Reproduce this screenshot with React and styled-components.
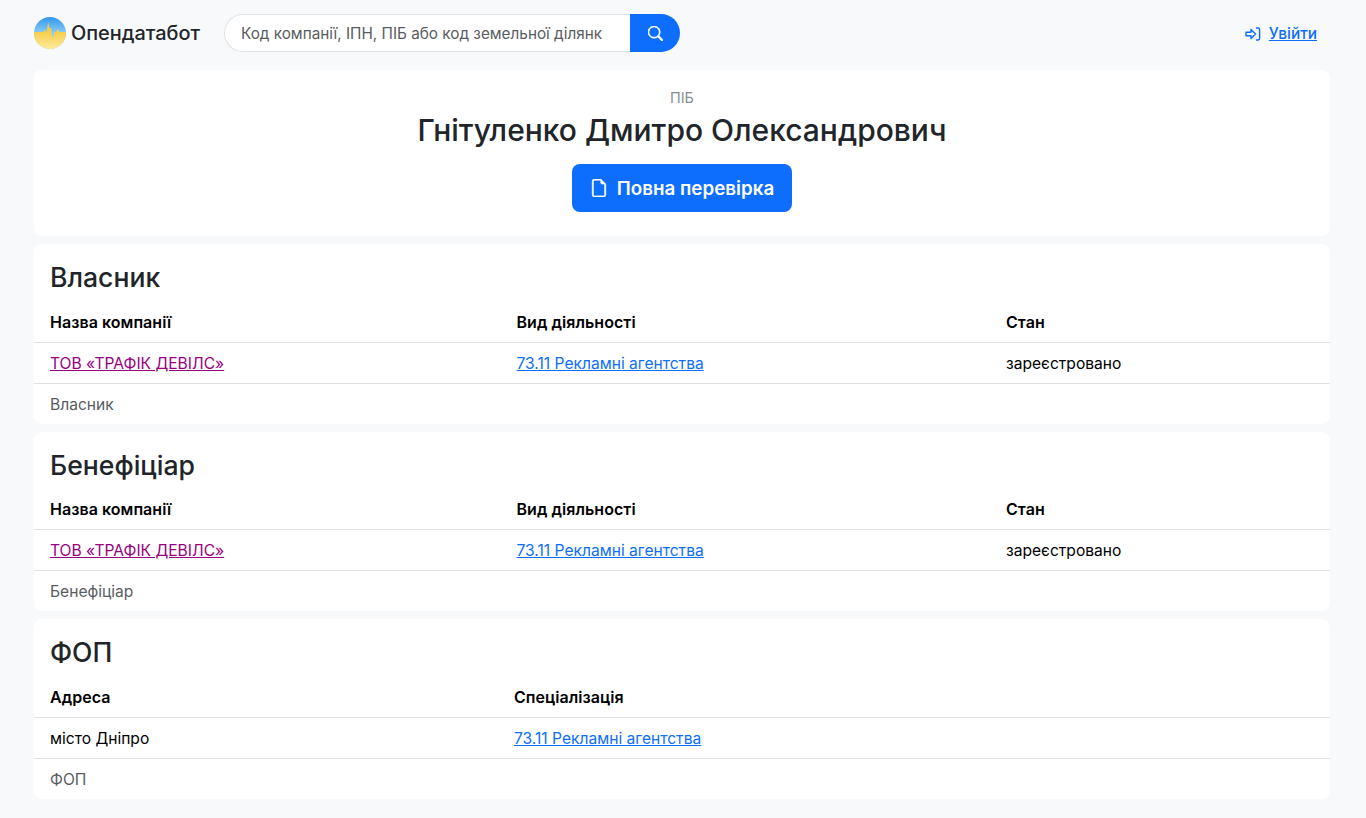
import React from 'react';
import styled, { createGlobalStyle } from 'styled-components';
import { BsSearch, BsFileEarmark } from 'react-icons/bs';

const GlobalStyle = createGlobalStyle`
  * { box-sizing: border-box; }
  body {
    margin: 0;
    background: #f8f9fa;
    color: #000;
    font-family: Inter, "Noto Sans", sans-serif;
    font-size: 15.6px;
    line-height: 24px;
  }
  a { color: #0d6efd; }
`;

const LogoMark = () => (
  <svg width="32" height="32" viewBox="0 0 32 32">
    <defs>
      <linearGradient id="sky" x1="0" y1="0" x2="0" y2="1">
        <stop offset="0" stopColor="#2f96ee" />
        <stop offset="0.5" stopColor="#8ccdf2" />
      </linearGradient>
      <linearGradient id="wheat" x1="0" y1="0" x2="0" y2="1">
        <stop offset="0.3" stopColor="#f4cb42" />
        <stop offset="1" stopColor="#fdea9c" />
      </linearGradient>
      <clipPath id="disc">
        <circle cx="16" cy="16" r="16" />
      </clipPath>
    </defs>
    <g clipPath="url(#disc)">
      <rect width="32" height="32" fill="url(#sky)" />
      <path
        d="M0 15 L9 15 L11 13 L12.5 15 L14.2 5 L15.5 11 L17 11 L18.5 21 L20.5 15 L22 15 L24 12 L25.5 15 L32 15 V32 H0 Z"
        fill="url(#wheat)"
      />
    </g>
  </svg>
);

const LoginIcon = () => (
  <svg width="16" height="16" viewBox="0 0 16 16" fill="none" stroke="currentColor" strokeWidth="1.4" strokeLinejoin="round">
    <path d="M1 6.2 H6 V3.4 L10.6 8 L6 12.6 V9.8 H1 Z" />
    <path d="M11 2 H13.2 Q14.6 2 14.6 3.4 V12.6 Q14.6 14 13.2 14 H11" />
  </svg>
);

const App = () => {
  return (
    <Page>
      <GlobalStyle />
      <Header>
        <Brand>
          <LogoMark />
          <BrandName>Опендатабот</BrandName>
        </Brand>
        <SearchForm>
          <SearchInput placeholder="Код компанії, ІПН, ПІБ або код земельної ділянк" />
          <SearchButton type="button">
            <SearchGlyph size={15} />
          </SearchButton>
        </SearchForm>
        <Login href="#">
          <LoginIcon />
          <span>Увійти</span>
        </Login>
      </Header>

      <Main>
        <HeroCard>
          <HeroLabel>ПІБ</HeroLabel>
          <HeroTitle>Гнітуленко Дмитро Олександрович</HeroTitle>
          <CheckButton type="button">
            <FileGlyph size={18} />
            Повна перевірка
          </CheckButton>
        </HeroCard>

        <CompanySection title="Власник" />
        <CompanySection title="Бенефіціар" />

        <Card>
          <CardTitle>ФОП</CardTitle>
          <Row $cols="464px 1fr" $head>
            <span>Адреса</span>
            <span>Спеціалізація</span>
          </Row>
          <Row $cols="464px 1fr">
            <span>місто Дніпро</span>
            <a href="#">73.11 Рекламні агентства</a>
          </Row>
          <Note>ФОП</Note>
        </Card>
      </Main>
    </Page>
  );
};

const CompanySection = ({ title }) => (
  <Card>
    <CardTitle>{title}</CardTitle>
    <Row $cols="466.5px 489.5px 1fr" $head>
      <span>Назва компанії</span>
      <span>Вид діяльності</span>
      <span>Стан</span>
    </Row>
    <Row $cols="466.5px 489.5px 1fr">
      <VisitedLink href="#">ТОВ «ТРАФІК ДЕВІЛС»</VisitedLink>
      <a href="#">73.11 Рекламні агентства</a>
      <span>зареєстровано</span>
    </Row>
    <Note>{title}</Note>
  </Card>
);

const Page = styled.div`
  padding: 0 36px 19px 34px;
`;

const Header = styled.header`
  display: flex;
  align-items: center;
  height: 66px;
`;

const Brand = styled.div`
  display: flex;
  align-items: center;
  gap: 5px;
  width: 190px;
`;

const BrandName = styled.span`
  font-size: 19.9px;
  font-weight: 500;
  color: #212529;
`;

const SearchForm = styled.form`
  display: flex;
  width: 456px;
  height: 38px;
`;

const SearchInput = styled.input`
  flex: 1;
  min-width: 0;
  padding: 0 16px;
  border: 1px solid #dee2e6;
  border-right: 0;
  border-radius: 19px 0 0 19px;
  background: #fff;
  font: 400 15.3px Inter, sans-serif;
  color: #212529;
  outline: none;

  &::placeholder {
    color: #595c5f;
    opacity: 1;
  }
`;

const SearchButton = styled.button`
  display: flex;
  align-items: center;
  justify-content: center;
  width: 50px;
  padding: 0;
  border: 0;
  border-radius: 0 19px 19px 0;
  background: #0d6efd;
  color: #fff;
`;

const SearchGlyph = styled(BsSearch)`
  stroke: currentColor;
  stroke-width: 0.7px;
`;

const Login = styled.a`
  display: flex;
  align-items: center;
  gap: 8px;
  margin-left: auto;
  margin-right: 13px;
  padding-top: 1px;
  font-size: 15.4px;
  font-weight: 500;
  text-decoration: none;

  span {
    text-decoration: underline;
  }

  svg {
    flex: none;
  }
`;

const Main = styled.main`
  display: flex;
  flex-direction: column;
  gap: 8px;
  margin-top: 4px;
`;

const Card = styled.section`
  padding-top: 16px;
  background: #fff;
  border-radius: 8px;
  overflow: hidden;
`;

const HeroCard = styled(Card)`
  display: flex;
  flex-direction: column;
  align-items: center;
  height: 166px;
`;

const HeroLabel = styled.div`
  font-size: 14.4px;
  line-height: 24px;
  color: #868e96;
`;

const HeroTitle = styled.h1`
  margin: 1px 0 15px;
  font-size: 30px;
  line-height: 38px;
  font-weight: 500;
  color: #212529;
`;

const CheckButton = styled.button`
  display: flex;
  align-items: center;
  justify-content: center;
  gap: 9px;
  width: 220px;
  height: 48px;
  border: 0;
  border-radius: 8px;
  background: #0d6efd;
  color: #fff;
  font: 600 18.8px Inter, sans-serif;
`;

const FileGlyph = styled(BsFileEarmark)`
  stroke: currentColor;
  stroke-width: 0.6px;
`;

const CardTitle = styled.h2`
  margin: 0 0 2px;
  padding: 0 16px;
  font-size: 26.6px;
  line-height: 34px;
  font-weight: 500;
  color: #212529;
`;

const Row = styled.div`
  display: grid;
  grid-template-columns: ${(p) => p.$cols};
  align-items: center;
  height: ${(p) => (p.$head ? '46.6px' : '41px')};
  padding: ${(p) => (p.$head ? '6px' : '2px')} 16px 0;
  border-bottom: 1px solid #dee2e6;
  font-size: ${(p) => (p.$head ? '16px' : 'inherit')};
  font-weight: ${(p) => (p.$head ? 600 : 400)};
  letter-spacing: ${(p) => (p.$head ? '0.05px' : '0')};
`;

const VisitedLink = styled.a`
  color: #99007f;
`;

const Note = styled.div`
  height: 40px;
  padding: 9px 16px 0;
  color: #595c5f;
`;

export default App;
